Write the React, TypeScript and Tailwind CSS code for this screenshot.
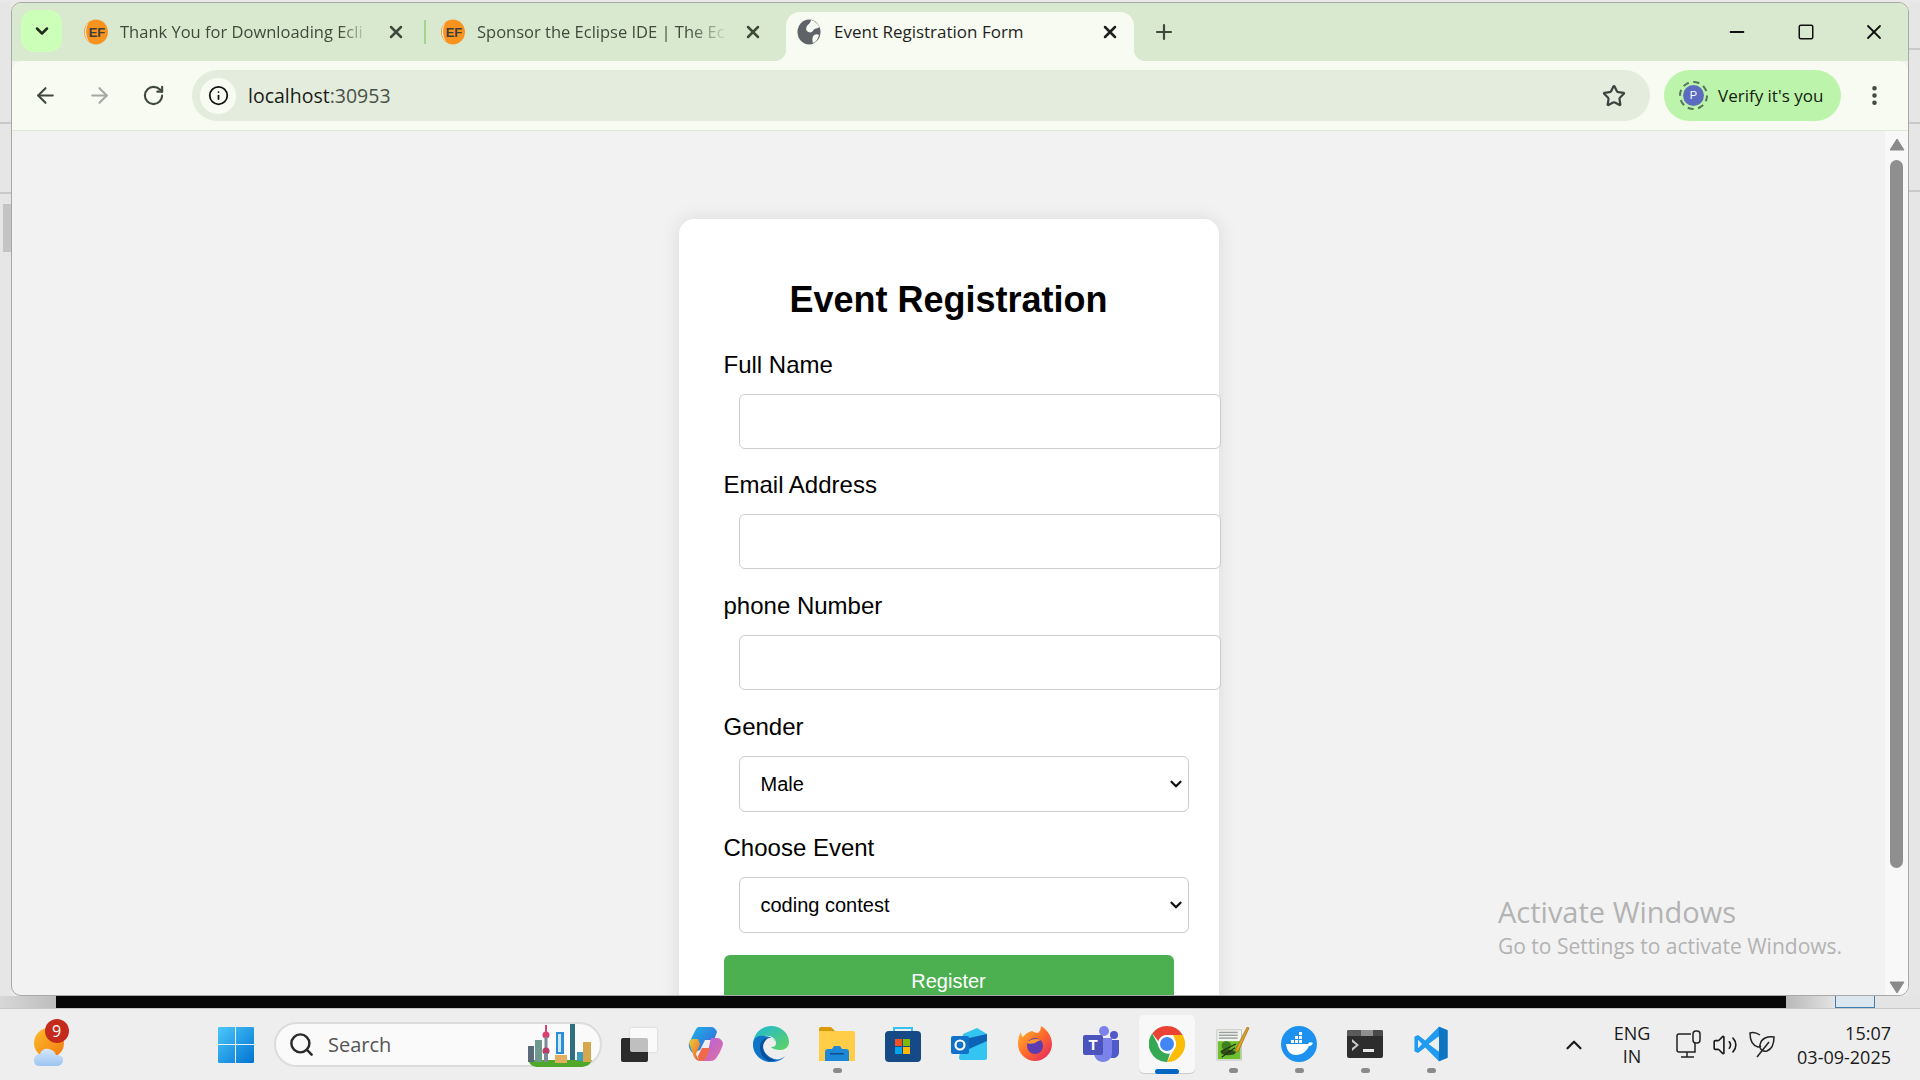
import { ArrowLeft, ArrowRight, ChevronDown, ChevronUp, EllipsisVertical, Info, Minus, Plus, RotateCw, Search, Square, Star, Volume2, X } from 'lucide-react';

const uiFont = 'font-["Open_Sans","Noto_Sans",sans-serif]';

const fields = [
  { label: 'Full Name', labelClass: 'mt-0', boxClass: 'mt-[15px]' },
  { label: 'Email Address', labelClass: 'mt-[22px]', boxClass: 'mt-[15px]' },
  { label: 'phone Number', labelClass: 'mt-[23px]', boxClass: 'mt-[15px]' },
];

const selects = [
  { label: 'Gender', value: 'Male', options: ['Male', 'Female'], labelClass: 'mt-[23px]', boxClass: 'mt-[15px]' },
  { label: 'Choose Event', value: 'coding contest', options: ['coding contest', 'hackathon'], labelClass: 'mt-[22px]', boxClass: 'mt-[15px]' },
];

function EclipseFavicon() {
  return (
    <svg width="24" height="26" viewBox="0 0 24 26" className="shrink-0">
      <ellipse cx="12" cy="13" rx="12" ry="12.5" fill="#f7931e" />
      <path d="M5 3.5C1.5 7 1 17 5 22.5 2.5 21 .8 17 .8 13S2.5 5 5 3.5z" fill="#fff" opacity="0.8" />
      <text x="13" y="18" textAnchor="middle" fontSize="13" fontWeight="700" fill="#3d3d3d" fontFamily="Liberation Sans, sans-serif">EF</text>
    </svg>
  );
}

function GlobeFavicon() {
  return (
    <svg width="24" height="26" viewBox="0 0 24 26" className="shrink-0">
      <ellipse cx="12" cy="13" rx="11.5" ry="12.5" fill="#5f6368" />
      <path d="M14 1c4 1 7 4 8.500 7-2 2-5 1-6 3s-3 3-5 2-3-2-2-5 4-3 4.500-7zM17 16c2-1 4-1 5 0-1 4-3 7-6 8-1-2-1-6 1-8z" fill="#f7fbf2" />
    </svg>
  );
}

function WeatherIcon() {
  return (
    <div className="relative h-[46px] w-[38px]">
      <svg width="38" height="46" viewBox="0 0 38 46" className="absolute left-0 top-0">
        <defs>
          <linearGradient id="sun" x1="0" y1="0" x2="1" y2="1">
            <stop offset="0" stopColor="#fbbc2c" />
            <stop offset="1" stopColor="#f47a10" />
          </linearGradient>
          <linearGradient id="cloud" x1="0" y1="0" x2="0" y2="1">
            <stop offset="0" stopColor="#d6e8fb" />
            <stop offset="1" stopColor="#9cc4f2" />
          </linearGradient>
        </defs>
        <circle cx="18" cy="21" r="15" fill="url(#sun)" />
        <path d="M9 44c-5 0-6-3-6-6s2-6 6-6c1-4 5-6 9-5s6 3 7 6c4 0 7 1 7 5s-3 6-7 6z" fill="url(#cloud)" />
      </svg>
      <span className="absolute left-[14px] -top-[3px] flex h-[24px] w-[24px] items-center justify-center rounded-full bg-[#c42b1c] text-[16px] text-white font-['Open_Sans',sans-serif]">9</span>
    </div>
  );
}

function WindowsLogo() {
  return (
    <svg width="36" height="36" viewBox="0 0 36 36">
      <defs>
        <linearGradient id="win" x1="0" y1="0" x2="1" y2="1">
          <stop offset="0" stopColor="#4cc8fb" />
          <stop offset="1" stopColor="#0073d1" />
        </linearGradient>
      </defs>
      <path d="M0 1a1 1 0 0 1 1-1h16v17H0zM18 0h17a1 1 0 0 1 1 1v16H18zM0 18h17v18H1a1 1 0 0 1-1-1zM18 18h18v17a1 1 0 0 1-1 1H18z" fill="url(#win)" />
    </svg>
  );
}

function CityScene() {
  return (
    <svg width="68" height="46" viewBox="0 0 68 46">
      <path d="M2 38h64c-2 5-6 7-12 7H12C7 45 4 43 2 38z" fill="#4fa82a" />
      <rect x="2" y="24" width="6" height="16" fill="#5b6a78" />
      <rect x="9" y="18" width="7" height="22" fill="#6d9a8c" />
      <rect x="19" y="3" width="2" height="12" fill="#d8416f" />
      <circle cx="20" cy="13" r="3.5" fill="#d8416f" />
      <rect x="18.5" y="15" width="3" height="14" fill="#7b8a96" />
      <circle cx="20" cy="29" r="3.5" fill="#b73a66" />
      <rect x="18" y="31" width="4" height="9" fill="#7b8a96" />
      <rect x="30" y="10" width="8" height="22" fill="#2b8fd8" />
      <rect x="32" y="12" width="3" height="18" fill="#cfe8fa" />
      <rect x="29" y="33" width="12" height="8" fill="#e0b060" />
      <rect x="44" y="2" width="5" height="36" fill="#2f6f7f" />
      <rect x="51" y="30" width="6" height="9" fill="#3f9ac0" />
      <rect x="57" y="20" width="8" height="20" fill="#d6a84e" />
    </svg>
  );
}

function TaskViewIcon() {
  return (
    <div className="relative h-[34px] w-[36px]">
      <div className="absolute bottom-0 left-0 h-[24px] w-[27px] rounded-[2px] bg-[#2b2b2b]" />
      <div className="absolute right-0 top-0 h-[24px] w-[27px] rounded-[2px] bg-[#ffffff]/70 shadow-[0_0_2px_rgba(0,0,0,0.2)]" />
    </div>
  );
}

function CopilotIcon() {
  return (
    <svg width="36" height="36" viewBox="0 0 36 36">
      <defs>
        <linearGradient id="copA" x1="0" y1="0" x2="1" y2="1">
          <stop offset="0" stopColor="#1fb6e8" />
          <stop offset="0.6" stopColor="#2f7fe0" />
          <stop offset="1" stopColor="#1f4fc0" />
        </linearGradient>
        <linearGradient id="copB" x1="0" y1="0" x2="1" y2="1">
          <stop offset="0" stopColor="#e0d040" />
          <stop offset="0.5" stopColor="#f09030" />
          <stop offset="1" stopColor="#e85050" />
        </linearGradient>
        <linearGradient id="copC" x1="0" y1="0" x2="1" y2="1">
          <stop offset="0" stopColor="#b060e0" />
          <stop offset="1" stopColor="#e070a0" />
        </linearGradient>
      </defs>
      <path d="M12 1h12c3 0 5 2 6 5l-3 8h-9l-5 10-7 3C3 25 1 20 2 17L8 5c1-2 2-4 4-4z" fill="url(#copA)" />
      <path d="M2 17c1-3 2-4 4-4h5l2 5-4 10c1 3 3 7 6 7h-1c-3 0-5-1-7-4z" fill="url(#copB)" />
      <path d="M24 12h6c3 0 5 2 6 5 0 3-2 6-3 9l-3 5c-2 3-4 4-7 4h-9c3-1 5-3 6-6z" fill="url(#copC)" />
      <path d="M14 35c3 0 5-2 6-5l3-8-8 0-4 8c0 3 1 5 3 5z" fill="#f06a4a" />
    </svg>
  );
}

function EdgeIcon() {
  return (
    <svg width="36" height="36" viewBox="0 0 36 36">
      <defs>
        <linearGradient id="edge" x1="0" y1="0" x2="1" y2="1">
          <stop offset="0" stopColor="#1fb8d8" />
          <stop offset="1" stopColor="#5fd35f" />
        </linearGradient>
      </defs>
      <path d="M18 0c10 0 18 7 18 16 0 5-4 8-9 8-3 0-8-1-9-3 3 0 5-1 5-4 0-4-5-8-11-7C6 11 2 15 0 19 0 8 8 0 18 0z" fill="url(#edge)" />
      <path d="M0 19C0 11 6 9 11 10c6 0 11 3 11 7 0-3-2-5-5-5-5 0-7 4-7 8 0 6 5 11 11 13 4 1 8 0 11-3-3 4-8 6-14 6C8 36 0 28 0 19z" fill="#0f74c8" />
      <path d="M16 35C10 33 7 27 7 21c0-5 3-9 8-9-3 3-5 5-5 9 0 7 6 12 13 13-2 1-5 1-7 1z" fill="#0a4f9a" />
    </svg>
  );
}

function ExplorerIcon() {
  return (
    <svg width="36" height="34" viewBox="0 0 36 34">
      <path d="M0 2a2 2 0 0 1 2-2h10l4 4H0z" fill="#d99a0a" />
      <path d="M0 4h34a2 2 0 0 1 2 2v28H0z" fill="#ffcd48" />
      <path d="M6 34v-9a3 3 0 0 1 3-3h4l2-3h6l2 3h4a3 3 0 0 1 3 3v9z" fill="#1e88d8" />
      <rect x="11" y="26" width="14" height="1.5" fill="#0b4f8f" />
    </svg>
  );
}

function StoreIcon() {
  return (
    <svg width="36" height="36" viewBox="0 0 36 36">
      <path d="M9 6V2h18v4" fill="none" stroke="#35c1f1" strokeWidth="2" />
      <rect x="0" y="5" width="36" height="31" rx="4" fill="#164a86" />
      <rect x="10" y="13" width="7" height="7" fill="#f25022" />
      <rect x="18" y="13" width="7" height="7" fill="#7fba00" />
      <rect x="10" y="21" width="7" height="7" fill="#00a4ef" />
      <rect x="18" y="21" width="7" height="7" fill="#ffb900" />
    </svg>
  );
}

function OutlookIcon() {
  return (
    <svg width="36" height="32" viewBox="0 0 36 32">
      <path d="M12 6l14-6 10 6v24a2 2 0 0 1-2 2H10a2 2 0 0 1-2-2z" fill="#33c4f2" />
      <path d="M18 10L36 6v7l-18 8z" fill="#0e62b5" />
      <rect x="0" y="8" width="18" height="18" rx="2" fill="#0f72c8" />
      <circle cx="9" cy="17" r="4.5" fill="none" stroke="#fff" strokeWidth="2.2" />
    </svg>
  );
}

function FirefoxIcon() {
  return (
    <svg width="36" height="36" viewBox="0 0 36 36">
      <defs>
        <linearGradient id="fox" x1="0" y1="0" x2="1" y2="1">
          <stop offset="0" stopColor="#ffbd2f" />
          <stop offset="0.5" stopColor="#ff6a2a" />
          <stop offset="1" stopColor="#e3206a" />
        </linearGradient>
      </defs>
      <path d="M24 0c5 3 11 9 11 18a17 17 0 1 1-34 0c0-5 1-9 3-12 0 3 1 4 2 5 2-3 5-5 9-6 2 1 4 2 6 2 2-2 3-4 3-7z" fill="url(#fox)" />
      <circle cx="18" cy="20" r="8" fill="#5d3cb0" />
      <path d="M10 17c3-4 9-5 14-3-2 1-4 1-6 3-3 1-6 1-8 0z" fill="#ff9a2a" />
    </svg>
  );
}

function TeamsIcon() {
  return (
    <svg width="36" height="36" viewBox="0 0 36 36">
      <circle cx="21" cy="5" r="5" fill="#7b83eb" />
      <circle cx="31" cy="9" r="4" fill="#5059c9" />
      <path d="M24 14h12v12c0 4-3 6-6 6s-6-2-6-6z" fill="#5059c9" />
      <path d="M11 12h18v15c0 5-4 9-9 9s-9-4-9-9z" fill="#7b83eb" />
      <rect x="0" y="9" width="20" height="20" rx="2" fill="#4b53bc" />
      <text x="10" y="24" textAnchor="middle" fontSize="15" fontWeight="700" fill="#fff" fontFamily="Liberation Sans, sans-serif">T</text>
    </svg>
  );
}

function ChromeIcon() {
  return (
    <svg width="36" height="36" viewBox="0 0 36 36">
      <path d="M18 0a18 18 0 0 1 15.6 9H18a9 9 0 0 0-8.6 6.3L3.2 7.5A18 18 0 0 1 18 0z" fill="#ea4335" />
      <path d="M33.6 9A18 18 0 0 1 18 36l7.8-13.5A9 9 0 0 0 25.800 13.500 9 9 0 0 0 24 9z" fill="#fbbc04" />
      <path d="M3.200 7.500L11 22.500a9 9 0 0 0 10 5L18 36A18 18 0 0 1 3.200 7.500z" fill="#34a853" />
      <circle cx="18" cy="18" r="9" fill="#fff" />
      <circle cx="18" cy="18" r="7" fill="#4285f4" />
    </svg>
  );
}

function NotepadIcon() {
  return (
    <svg width="34" height="34" viewBox="0 0 36 36">
      <rect x="1" y="3" width="26" height="32" fill="#f2f5ee" stroke="#b8b8b8" strokeWidth="0.8" />
      <rect x="3" y="5" width="20" height="1.500" fill="#9aa0a0" />
      <rect x="3" y="8" width="20" height="1.500" fill="#9aa0a0" />
      <rect x="3" y="11" width="20" height="1.500" fill="#9aa0a0" />
      <path d="M2 15h24v19H2z" fill="#6fc02f" />
      <circle cx="11" cy="20" r="5" fill="#3f7f1f" />
      <ellipse cx="13" cy="27" rx="8" ry="3" fill="#2f4f1a" />
      <path d="M5 26l16-8M6 32l14-10" stroke="#1f2f10" strokeWidth="1.200" />
      <path d="M33 0l2 1-11 24-3 2 0-4z" fill="#e0a020" stroke="#8a5a10" strokeWidth="0.6" />
    </svg>
  );
}

function DockerIcon() {
  return (
    <svg width="36" height="36" viewBox="0 0 36 36">
      <circle cx="18" cy="18" r="18" fill="#1d91f0" />
      <path d="M5 18h22c1-2 3-2 5-1-1 2-2 3-4 3-2 5-7 9-13 9-6 0-9-4-10-11z" fill="#fff" />
      <path d="M10 14h3v3h-3zM14 14h3v3h-3zM18 14h3v3h-3zM14 10h3v3h-3zM18 10h3v3h-3zM18 6h3v3h-3z" fill="#fff" />
    </svg>
  );
}

function TerminalIcon() {
  return (
    <svg width="36" height="28" viewBox="0 0 36 28">
      <rect width="36" height="28" rx="2" fill="#2d2d2d" />
      <path d="M0 2a2 2 0 0 1 2-2h12v6H0z" fill="#5a5a5a" />
      <path d="M14 0h12v6H14z" fill="#8f8f8f" />
      <path d="M26 0h8a2 2 0 0 1 2 2v4H26z" fill="#4a4a4a" />
      <path d="M5 9l7 6-7 6v-3l4-3-4-3z" fill="#c8c8c8" />
      <rect x="16" y="19" width="11" height="3" fill="#e8e8e8" />
    </svg>
  );
}

function CodeIcon() {
  return (
    <svg width="36" height="38" viewBox="0 0 100 100">
      <path d="M72 2L34 40 14 25 4 30v40l10 5 20-15 38 38 24-10V12zM72 29L44 50l28 21zM14 38l11 12-11 12z" fill="#1f9cf0" fillRule="evenodd" />
      <path d="M72 2l24 10v76L72 98z" fill="#0f74c2" />
      <path d="M72 29L44 50l28 21z" fill="#eeeeee" />
    </svg>
  );
}

const taskIcons = [
  { id: 'copilot', icon: <CopilotIcon />, dot: false },
  { id: 'edge', icon: <EdgeIcon />, dot: false },
  { id: 'explorer', icon: <ExplorerIcon />, dot: true },
  { id: 'store', icon: <StoreIcon />, dot: false },
  { id: 'outlook', icon: <OutlookIcon />, dot: false },
  { id: 'firefox', icon: <FirefoxIcon />, dot: false },
  { id: 'teams', icon: <TeamsIcon />, dot: false },
  { id: 'chrome', icon: <ChromeIcon />, dot: false },
  { id: 'notepad', icon: <NotepadIcon />, dot: true },
  { id: 'docker', icon: <DockerIcon />, dot: true },
  { id: 'terminal', icon: <TerminalIcon />, dot: true },
  { id: 'code', icon: <CodeIcon />, dot: true },
];

function TaskButton({ id, icon, dot }: { id: string; icon: React.ReactNode; dot: boolean }) {
  const active = id === 'chrome';
  return (
    <div className="relative flex h-full w-[66px] items-center justify-center">
      {active && <div className="absolute left-[5px] top-[6px] h-[58px] w-[56px] rounded-[5px] bg-[#f8f8f8] shadow-[0_1px_1px_rgba(0,0,0,0.15)]" />}
      <div className="relative mb-[1px]">{icon}</div>
      {dot && <div className="absolute bottom-[7px] left-[29px] h-[5px] w-[9px] rounded-full bg-[#8a8a8a]" />}
      {active && <div className="absolute bottom-[6px] left-[21px] h-[5px] w-[24px] rounded-full bg-[#0067c0]" />}
    </div>
  );
}

function NetworkIcon() {
  return (
    <svg width="26" height="30" viewBox="0 0 26 30" fill="none" stroke="#222" strokeWidth="1.500">
      <path d="M15 4H3a2 2 0 0 0-2 2v14a2 2 0 0 0 2 2h16v-9" />
      <path d="M11 22v5M5 27h13" />
      <rect x="17" y="1" width="7" height="12" rx="3" />
    </svg>
  );
}

function LeafIcon() {
  return (
    <svg width="26" height="28" viewBox="0 0 26 28" fill="none" stroke="#222" strokeWidth="1.500">
      <path d="M11 4C8 2 4 1 1 2c0 5 1 12 8 14 1 0 2 0 3-1" />
      <path d="M25 6c-6-1-13 1-14 8-1 4 3 7 7 6 5-2 7-8 7-14z" />
      <path d="M20 11L8 26" />
    </svg>
  );
}

export default function App() {
  return (
    <div className="relative flex h-screen w-screen flex-col overflow-hidden bg-[#e9e9e9] font-['Liberation_Sans',sans-serif]">
      <div className="flex h-[996px] shrink-0 pt-[2px]">
        {/* window behind, left edge */}
        <div className="w-[11px] shrink-0 bg-[#e6e6e6]">
          <div className="mt-[120px] h-[2px] bg-[#c9c9c9]" />
          <div className="mt-[68px] h-[2px] bg-[#c9c9c9]" />
          <div className="mt-[10px] ml-[3px] h-[48px] bg-[#c4c4c4]" />
        </div>

        {/* browser window */}
        <div className="flex min-w-0 flex-1 flex-col overflow-hidden rounded-t-[10px] rounded-b-[10px] border border-[#a8a8a8] bg-[#f2f2f2]">
          {/* tab strip */}
          <div className="flex h-[58px] shrink-0 bg-[#d9e9cf]">
            <div className="ml-[9px] mt-[7px] flex h-[42px] w-[41px] items-center justify-center rounded-[13px] bg-[#ccffb8]">
              <ChevronDown size={20} strokeWidth={3} className="text-[#1f2a1c]" />
            </div>

            <div className={`flex h-[58px] items-center pl-[22px] text-[16.5px] text-[#3f4a3c] ${uiFont}`}>
              <EclipseFavicon />
              <span className="ml-[12px] w-[250px] overflow-hidden whitespace-nowrap [mask-image:linear-gradient(to_right,black_88%,transparent)]">Thank You for Downloading Ecli</span>
              <X size={20} strokeWidth={3} className="ml-[16px] text-[#3f4a3c]" />
            </div>
            <div className="ml-[18px] mt-[17px] h-[24px] w-[2px] bg-[#a3d38e]" />
            <div className={`flex h-[58px] items-center pl-[15px] text-[16.5px] text-[#3f4a3c] ${uiFont}`}>
              <EclipseFavicon />
              <span className="ml-[12px] w-[252px] overflow-hidden whitespace-nowrap [mask-image:linear-gradient(to_right,black_84%,transparent)]">Sponsor the Eclipse IDE | The Ec</span>
              <X size={20} strokeWidth={3} className="ml-[14px] text-[#3f4a3c]" />
            </div>

            <div className={`relative ml-[23px] mt-[9px] flex h-[49px] w-[348px] items-start rounded-t-[14px] bg-[#f7fbf2] pl-[11px] pt-[7px] text-[17px] text-[#1f1f1f] ${uiFont}`}>
              <div className="absolute -left-[12px] bottom-0 h-[12px] w-[12px] bg-[radial-gradient(circle_at_0_0,transparent_12px,#f7fbf2_12.5px)]" />
              <div className="absolute -right-[12px] bottom-0 h-[12px] w-[12px] bg-[radial-gradient(circle_at_100%_0,transparent_12px,#f7fbf2_12.5px)]" />
              <GlobeFavicon />
              <span className="ml-[13px] whitespace-nowrap">Event Registration Form</span>
              <X size={20} strokeWidth={3} className="absolute right-[14px] top-[10px] text-[#1f1f1f]" />
            </div>

            <div className="ml-[18px] flex h-[58px] items-center">
              <Plus size={24} strokeWidth={2.2} className="text-[#3f4a3c]" />
            </div>

            <div className="ml-auto flex h-[58px] items-center text-[#111]">
              <div className="flex w-[69px] justify-center"><Minus size={22} strokeWidth={2} /></div>
              <div className="flex w-[69px] justify-center"><Square size={18} strokeWidth={2} /></div>
              <div className="flex w-[68px] justify-center"><X size={24} strokeWidth={1.800} /></div>
            </div>
          </div>

          {/* toolbar */}
          <div className="flex h-[70px] shrink-0 items-center rounded-t-[10px] border-b border-[#dfe6d8] bg-[#f7fbf2] pl-[6px] text-[#3f4a3c]">
            <div className="flex w-[54px] justify-center"><ArrowLeft size={25} strokeWidth={2} /></div>
            <div className="flex w-[54px] justify-center"><ArrowRight size={25} strokeWidth={2} className="text-[#a5a9a2]" /></div>
            <div className="flex w-[54px] justify-center"><RotateCw size={23} strokeWidth={2.200} /></div>

            <div className="ml-[12px] flex h-[51px] min-w-0 flex-1 items-center rounded-full bg-[#e4ecdd] pl-[8px] pr-[24px]">
              <div className="flex h-[36px] w-[36px] items-center justify-center rounded-full bg-[#f7fbf2]">
                <Info size={21} strokeWidth={2} className="text-[#111]" />
              </div>
              <span className={`ml-[12px] text-[19.5px] ${uiFont}`}>
                <span className="text-[#1a1c18]">localhost</span>
                <span className="text-[#4a5248]">:30953</span>
              </span>
              <Star size={24} strokeWidth={2.200} className="ml-auto text-[#3f4340]" />
            </div>

            <div className="ml-[14px] flex h-[51px] w-[177px] items-center rounded-full bg-[#bdf4ab] pl-[15px]">
              <div className="flex h-[29px] w-[29px] items-center justify-center rounded-full border-2 border-dashed border-[#55775a]">
                <div className="flex h-[21px] w-[21px] items-center justify-center rounded-full bg-[#5c6bc0] text-[11px] text-white">P</div>
              </div>
              <span className={`ml-[10px] whitespace-nowrap text-[17px] text-[#13200f] ${uiFont}`}>Verify it's you</span>
            </div>

            <div className="flex w-[67px] justify-center"><EllipsisVertical size={25} strokeWidth={2.400} /></div>
          </div>

          {/* page */}
          <div className="flex min-h-0 flex-1">
            <div className="flex min-w-0 flex-1 justify-center overflow-hidden">
              <div className="mt-[88px] h-fit w-[540px] shrink-0 rounded-[15px] bg-white px-[45px] pb-[40px] pt-[60px] text-black shadow-[0_0_20px_rgba(0,0,0,0.1)]">
                <h2 className="mb-[31px] text-center text-[36px] leading-[41px] font-bold">Event Registration</h2>

                {fields.map((field) => (
                  <div key={field.label}>
                    <label className={`block text-[24px] leading-[28px] ${field.labelClass}`}>{field.label}</label>
                    <input type="text" className={`ml-[15px] block h-[55px] w-[482px] max-w-none rounded-[6px] border border-[#cccccc] bg-white ${field.boxClass}`} />
                  </div>
                ))}

                {selects.map((field) => (
                  <div key={field.label}>
                    <label className={`block text-[24px] leading-[28px] ${field.labelClass}`}>{field.label}</label>
                    <div className={`relative ml-[15px] h-[56px] w-[450px] ${field.boxClass}`}>
                      <select defaultValue={field.value} className="block h-full w-full appearance-none rounded-[6px] border border-[#cccccc] bg-white pl-[21px] text-[20px]">
                        {field.options.map((option) => (
                          <option key={option}>{option}</option>
                        ))}
                      </select>
                      <ChevronDown size={18} strokeWidth={3} className="pointer-events-none absolute right-[4px] top-[19px] text-[#111]" />
                    </div>
                  </div>
                ))}

                <button className="mt-[22px] block h-[52px] w-[450px] rounded-[6px] bg-[#4caf50] text-[20px] text-white">Register</button>
              </div>
            </div>

            {/* scrollbar */}
            <div className="flex w-[23px] shrink-0 flex-col items-center bg-[#f8f8f8] pb-[1px] pt-[7px]">
              <svg width="16" height="13" viewBox="0 0 16 13"><path d="M8 1l7 11H1z" fill="#8a8a8a" stroke="#8a8a8a" strokeLinejoin="round" /></svg>
              <div className="mt-[9px] w-[13px] flex-1 rounded-full bg-[#8f8f8f]" />
              <div className="h-[113px]" />
              <svg width="16" height="13" viewBox="0 0 16 13"><path d="M8 12L1 1h14z" fill="#8a8a8a" stroke="#8a8a8a" strokeLinejoin="round" /></svg>
            </div>
          </div>
        </div>

        {/* window behind, right edge */}
        <div className="w-[11px] shrink-0 bg-[#e6e6e6]">
          <div className="mt-[46px] h-[2px] bg-[#c9c9c9]" />
          <div className="mt-[72px] h-[2px] bg-[#c9c9c9]" />
          <div className="mt-[66px] h-[2px] bg-[#c9c9c9]" />
        </div>
      </div>

      {/* what shows between the window and the taskbar */}
      <div className="flex h-[12px] shrink-0">
        <div className="w-[56px] bg-[linear-gradient(to_right,#d8d8d8,#bdbdbd)]" />
        <div className="w-[1730px] bg-[#080808]" />
        <div className="w-[49px] bg-[linear-gradient(to_right,#b8b8b8,#e4e4e4)]" />
        <div className="w-[40px] border-x border-b border-[#3f7fb0] bg-[#dbe6ee]" />
        <div className="flex-1 bg-[#e4e4e4]" />
      </div>

      {/* taskbar */}
      <div className="flex h-[72px] shrink-0 items-center border-t border-[#c8c8c8] bg-[#eeeeee] text-[#1a1a1a]">
        <div className="flex w-[96px] justify-center pl-[3px]"><WeatherIcon /></div>
        <div className="ml-[107px] flex w-[66px] justify-center"><WindowsLogo /></div>
        <div className="ml-[5px] flex h-[45px] w-[328px] shrink-0 items-center rounded-full border-2 border-[#dcdcdc] bg-[#fafafa] pl-[12px] pr-[6px]">
          <Search size={27} strokeWidth={2.200} className="text-[#2a2a2a]" />
          <span className={`ml-[13px] text-[20px] text-[#555] ${uiFont}`}>Search</span>
          <div className="ml-auto"><CityScene /></div>
        </div>
        <div className="ml-[4px] flex h-full w-[66px] items-center justify-center"><TaskViewIcon /></div>
        <div className="flex h-full">
          {taskIcons.map((item) => (
            <TaskButton key={item.id} id={item.id} icon={item.icon} dot={item.dot} />
          ))}
        </div>

        <div className="ml-[90px] flex w-[40px] justify-center"><ChevronUp size={26} strokeWidth={2} /></div>
        <div className={`ml-[6px] w-[64px] text-center text-[18px] leading-[23px] ${uiFont}`}>
          <div>ENG</div>
          <div>IN</div>
        </div>
        <div className="ml-[12px] flex w-[26px] justify-center"><NetworkIcon /></div>
        <Volume2 size={26} strokeWidth={1.500} className="ml-[10px]" />
        <div className="ml-[11px]"><LeafIcon /></div>
        <div className={`ml-auto pr-[29px] text-right text-[18px] leading-[24px] ${uiFont}`}>
          <div>15:07</div>
          <div>03-09-2025</div>
        </div>
      </div>

      {/* activation watermark */}
      <div className={`pointer-events-none absolute left-[1498px] top-[893px] text-[#b3b3b3] ${uiFont}`}>
        <div className="text-[29px] leading-[38px]">Activate Windows</div>
        <div className="text-[21px] leading-[30px]">Go to Settings to activate Windows.</div>
      </div>
    </div>
  );
}
